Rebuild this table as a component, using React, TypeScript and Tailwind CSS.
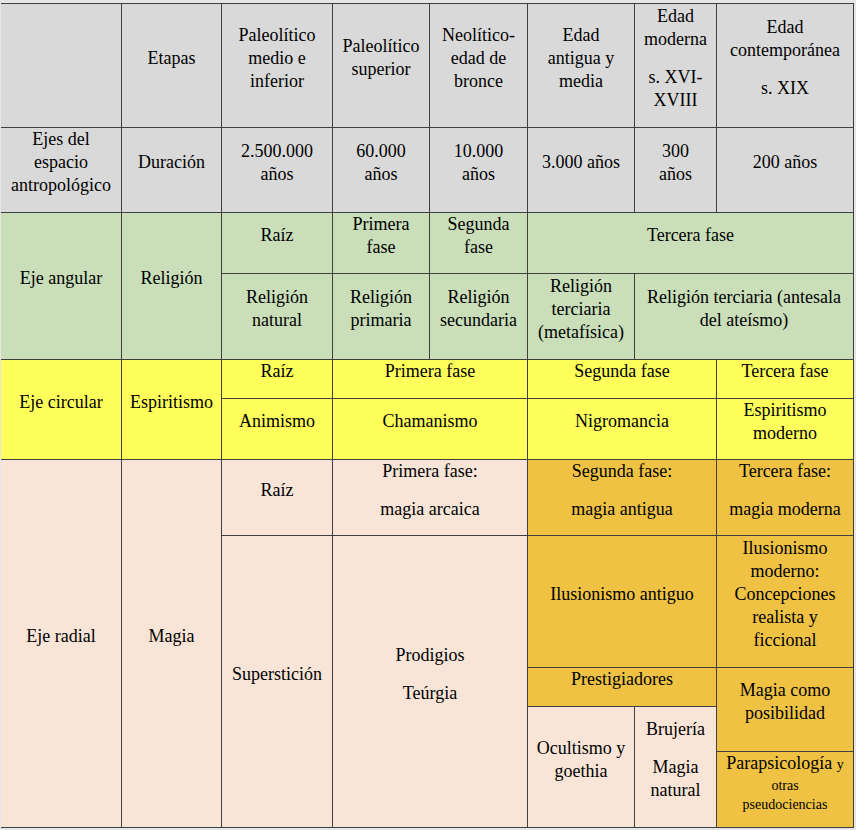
import type { ReactNode } from 'react'

const gray = 'bg-[#d9d9d9]'
const green = 'bg-[#c9deb9]'
const yellow = 'bg-[#ffff5c]'
const peach = 'bg-[#f8e5d7]'
const gold = 'bg-[#efc243]'

function Cell({ className, children }: { className: string; children?: ReactNode }) {
  return (
    <div className={`flex flex-col items-center justify-center px-[7px] text-center font-[Liberation_Serif,serif] text-[18px] leading-[23px] ${className}`}>
      {children}
    </div>
  )
}

function P({ children }: { children: ReactNode }) {
  return <p className="mb-[15px] font-[Liberation_Serif,serif]">{children}</p>
}

export default function App() {
  return (
    <div className="min-h-screen bg-[#e6e6e6] pt-[3px] pl-px font-[Liberation_Serif,serif]">
      <div className="inline-grid grid-cols-[120px_99px_110px_96px_97px_106px_81px_136px] grid-rows-[123px_84px_60px_85px_38px_60px_75px_131px_38px_44px_75px] gap-px bg-[#404040] pt-px pr-px pb-px">
        {/* Header */}
        <Cell className={`col-start-1 row-start-1 ${gray}`} />
        <Cell className={`col-start-2 row-start-1 ${gray}`}><P>Etapas</P></Cell>
        <Cell className={`col-start-3 row-start-1 ${gray}`}><P>Paleolítico medio e inferior</P></Cell>
        <Cell className={`col-start-4 row-start-1 ${gray}`}><P>Paleolítico superior</P></Cell>
        <Cell className={`col-start-5 row-start-1 ${gray}`}><P>Neolítico-edad de bronce</P></Cell>
        <Cell className={`col-start-6 row-start-1 ${gray}`}><P>Edad antigua y media</P></Cell>
        <Cell className={`col-start-7 row-start-1 ${gray}`}><P>Edad moderna</P><P>s. XVI-XVIII</P></Cell>
        <Cell className={`col-start-8 row-start-1 ${gray}`}><P>Edad contemporánea</P><P>s. XIX</P></Cell>

        {/* Duración */}
        <Cell className={`col-start-1 row-start-2 ${gray}`}><P>Ejes del espacio antropológico</P></Cell>
        <Cell className={`col-start-2 row-start-2 ${gray}`}><P>Duración</P></Cell>
        <Cell className={`col-start-3 row-start-2 ${gray}`}><P>2.500.000 años</P></Cell>
        <Cell className={`col-start-4 row-start-2 ${gray}`}><P>60.000 años</P></Cell>
        <Cell className={`col-start-5 row-start-2 ${gray}`}><P>10.000 años</P></Cell>
        <Cell className={`col-start-6 row-start-2 ${gray}`}><P>3.000 años</P></Cell>
        <Cell className={`col-start-7 row-start-2 ${gray}`}><P>300<br />años</P></Cell>
        <Cell className={`col-start-8 row-start-2 ${gray}`}><P>200 años</P></Cell>

        {/* Eje angular */}
        <Cell className={`col-start-1 row-start-3 row-span-2 ${green}`}><P>Eje angular</P></Cell>
        <Cell className={`col-start-2 row-start-3 row-span-2 ${green}`}><P>Religión</P></Cell>
        <Cell className={`col-start-3 row-start-3 ${green}`}><P>Raíz</P></Cell>
        <Cell className={`col-start-4 row-start-3 ${green}`}><P>Primera fase</P></Cell>
        <Cell className={`col-start-5 row-start-3 ${green}`}><P>Segunda fase</P></Cell>
        <Cell className={`col-start-6 row-start-3 col-span-3 ${green}`}><P>Tercera fase</P></Cell>
        <Cell className={`col-start-3 row-start-4 ${green}`}><P>Religión natural</P></Cell>
        <Cell className={`col-start-4 row-start-4 ${green}`}><P>Religión primaria</P></Cell>
        <Cell className={`col-start-5 row-start-4 ${green}`}><P>Religión secundaria</P></Cell>
        <Cell className={`col-start-6 row-start-4 ${green}`}><P>Religión terciaria (metafísica)</P></Cell>
        <Cell className={`col-start-7 row-start-4 col-span-2 ${green}`}><P>Religión terciaria (antesala del ateísmo)</P></Cell>

        {/* Eje circular */}
        <Cell className={`col-start-1 row-start-5 row-span-2 ${yellow}`}><P>Eje circular</P></Cell>
        <Cell className={`col-start-2 row-start-5 row-span-2 ${yellow}`}><P>Espiritismo</P></Cell>
        <Cell className={`col-start-3 row-start-5 ${yellow}`}><P>Raíz</P></Cell>
        <Cell className={`col-start-4 row-start-5 col-span-2 ${yellow}`}><P>Primera fase</P></Cell>
        <Cell className={`col-start-6 row-start-5 col-span-2 ${yellow}`}><P>Segunda fase</P></Cell>
        <Cell className={`col-start-8 row-start-5 ${yellow}`}><P>Tercera fase</P></Cell>
        <Cell className={`col-start-3 row-start-6 ${yellow}`}><P>Animismo</P></Cell>
        <Cell className={`col-start-4 row-start-6 col-span-2 ${yellow}`}><P>Chamanismo</P></Cell>
        <Cell className={`col-start-6 row-start-6 col-span-2 ${yellow}`}><P>Nigromancia</P></Cell>
        <Cell className={`col-start-8 row-start-6 ${yellow}`}><P>Espiritismo moderno</P></Cell>

        {/* Eje radial */}
        <Cell className={`col-start-1 row-start-7 row-span-5 ${peach}`}><P>Eje radial</P></Cell>
        <Cell className={`col-start-2 row-start-7 row-span-5 ${peach}`}><P>Magia</P></Cell>
        <Cell className={`col-start-3 row-start-7 ${peach}`}><P>Raíz</P></Cell>
        <Cell className={`col-start-4 row-start-7 col-span-2 ${peach}`}><P>Primera fase:</P><P>magia arcaica</P></Cell>
        <Cell className={`col-start-6 row-start-7 col-span-2 ${gold}`}><P>Segunda fase:</P><P>magia antigua</P></Cell>
        <Cell className={`col-start-8 row-start-7 ${gold}`}><P>Tercera fase:</P><P>magia moderna</P></Cell>
        <Cell className={`col-start-3 row-start-8 row-span-4 ${peach}`}><P>Superstición</P></Cell>
        <Cell className={`col-start-4 row-start-8 col-span-2 row-span-4 ${peach}`}><P>Prodigios</P><P>Teúrgia</P></Cell>
        <Cell className={`col-start-6 row-start-8 col-span-2 ${gold}`}><P>Ilusionismo antiguo</P></Cell>
        <Cell className={`col-start-8 row-start-8 ${gold}`}><P>Ilusionismo moderno: Concepciones realista y ficcional</P></Cell>
        <Cell className={`col-start-6 row-start-9 col-span-2 ${gold}`}><P>Prestigiadores</P></Cell>
        <Cell className={`col-start-8 row-start-9 row-span-2 ${gold}`}><P>Magia como posibilidad</P></Cell>
        <Cell className={`col-start-6 row-start-10 row-span-2 ${peach}`}><P>Ocultismo y goethia</P></Cell>
        <Cell className={`col-start-7 row-start-10 row-span-2 ${peach}`}><P>Brujería</P><P>Magia natural</P></Cell>
        <Cell className={`col-start-8 row-start-11 ${gold}`}>
          <div className="mb-[14px] font-[Liberation_Serif,serif]">
            <div>
              Parapsicología <span className="text-[14px]">y</span>
            </div>
            <div className="text-[14px] leading-[19px]">otras</div>
            <div className="text-[14px] leading-[19px]">pseudociencias</div>
          </div>
        </Cell>
      </div>
    </div>
  )
}
